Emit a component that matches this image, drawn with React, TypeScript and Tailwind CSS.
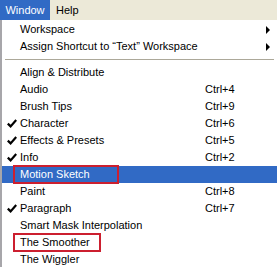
import React from 'react';

type Item = {
  label: string;
  shortcut?: string;
  checked?: boolean;
  submenu?: boolean;
  active?: boolean;
  boxed?: number;
};

const top: Item[] = [
  { label: 'Workspace', submenu: true },
  { label: 'Assign Shortcut to \u201CText\u201D Workspace', submenu: true },
];

const panels: Item[] = [
  { label: 'Align & Distribute' },
  { label: 'Audio', shortcut: 'Ctrl+4' },
  { label: 'Brush Tips', shortcut: 'Ctrl+9' },
  { label: 'Character', shortcut: 'Ctrl+6', checked: true },
  { label: 'Effects & Presets', shortcut: 'Ctrl+5', checked: true },
  { label: 'Info', shortcut: 'Ctrl+2', checked: true },
  { label: 'Motion Sketch', active: true, boxed: 106 },
  { label: 'Paint', shortcut: 'Ctrl+8' },
  { label: 'Paragraph', shortcut: 'Ctrl+7', checked: true },
  { label: 'Smart Mask Interpolation' },
  { label: 'The Smoother', boxed: 88 },
  { label: 'The Wiggler' },
];

function Row({ item }: { item: Item }) {
  return (
    <div
      className={
        'relative flex h-[17px] items-center ' +
        (item.active ? 'bg-[#316ac5] text-white' : 'text-black')
      }
    >
      <div className="flex w-[18px] pl-[5px]">
        {item.checked && (
          <svg width="10" height="9" viewBox="0 0 10 9">
            <path d="M0.8 4.6 L3.6 7.4 L9.2 1" fill="none" stroke="currentColor" strokeWidth="2.2" />
          </svg>
        )}
      </div>
      <span className="w-[185px] whitespace-nowrap">{item.label}</span>
      {item.shortcut && <span>{item.shortcut}</span>}
      {item.submenu && (
        <span className="ml-auto mr-[7px] h-0 w-0 border-y-[4px] border-l-[4px] border-y-transparent border-l-black" />
      )}
      {item.boxed && (
        <span
          className="absolute left-[11px] top-[-1px] h-[19px] border-2 border-[#cc1f2f]"
          style={{ width: item.boxed }}
        />
      )}
    </div>
  );
}

export default function App() {
  return (
    <div className="h-[267px] w-[277px] overflow-hidden bg-white font-['Liberation_Sans',sans-serif] text-[11px] leading-none">
      <div className="flex h-[20px] items-center bg-[#ece9d8]">
        <div className="flex h-full w-[50px] items-center justify-center bg-[#316ac5] text-white">Window</div>
        <div className="px-[6px]">Help</div>
      </div>
      <div className="border-l-2 border-l-[#a7a6aa] pt-[1px]">
        {top.map((it) => (
          <Row key={it.label} item={it} />
        ))}
        <div className="flex h-[9px] items-center px-[3px]">
          <div className="h-0 w-full border-t border-[#aca899]" />
        </div>
        {panels.map((it) => (
          <Row key={it.label} item={it} />
        ))}
      </div>
    </div>
  );
}
